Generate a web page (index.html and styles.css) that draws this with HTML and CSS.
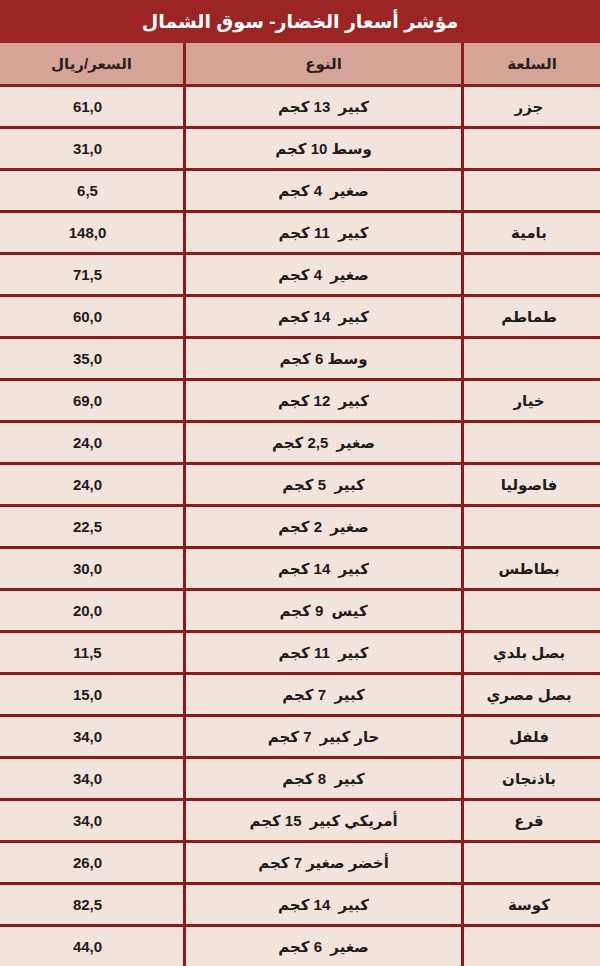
FILE: index.html
```html
<!DOCTYPE html>
<html lang="ar" dir="rtl">
<head>
<meta charset="utf-8">
<title>مؤشر أسعار الخضار- سوق الشمال</title>
<link rel="stylesheet" href="styles.css">
</head>
<body>
<div class="page">
  <h1 class="title">مؤشر أسعار الخضار- سوق الشمال</h1>
  <div class="grid">
    <div class="cell head">السلعة</div><div class="cell head">النوع</div><div class="cell head">السعر/ريال</div>

    <div class="cell name">جزر</div><div class="cell kind">كبير&nbsp; 13 كجم</div><div class="cell price">61,0</div>
    <div class="cell name"></div><div class="cell kind">وسط 10 كجم</div><div class="cell price">31,0</div>
    <div class="cell name"></div><div class="cell kind">صغير&nbsp; 4 كجم</div><div class="cell price">6,5</div>
    <div class="cell name">بامية</div><div class="cell kind">كبير&nbsp; 11 كجم</div><div class="cell price">148,0</div>
    <div class="cell name"></div><div class="cell kind">صغير&nbsp; 4 كجم</div><div class="cell price">71,5</div>
    <div class="cell name">طماطم</div><div class="cell kind">كبير&nbsp; 14 كجم</div><div class="cell price">60,0</div>
    <div class="cell name"></div><div class="cell kind">وسط 6 كجم</div><div class="cell price">35,0</div>
    <div class="cell name">خيار</div><div class="cell kind">كبير&nbsp; 12 كجم</div><div class="cell price">69,0</div>
    <div class="cell name"></div><div class="cell kind">صغير&nbsp; 2,5 كجم</div><div class="cell price">24,0</div>
    <div class="cell name">فاصوليا</div><div class="cell kind">كبير&nbsp; 5 كجم</div><div class="cell price">24,0</div>
    <div class="cell name"></div><div class="cell kind">صغير&nbsp; 2 كجم</div><div class="cell price">22,5</div>
    <div class="cell name">بطاطس</div><div class="cell kind">كبير&nbsp; 14 كجم</div><div class="cell price">30,0</div>
    <div class="cell name"></div><div class="cell kind">كيس&nbsp; 9 كجم</div><div class="cell price">20,0</div>
    <div class="cell name">بصل بلدي</div><div class="cell kind">كبير&nbsp; 11 كجم</div><div class="cell price">11,5</div>
    <div class="cell name">بصل مصري</div><div class="cell kind">كبير&nbsp; 7 كجم</div><div class="cell price">15,0</div>
    <div class="cell name">فلفل</div><div class="cell kind">حار كبير&nbsp; 7 كجم</div><div class="cell price">34,0</div>
    <div class="cell name">باذنجان</div><div class="cell kind">كبير&nbsp; 8 كجم</div><div class="cell price">34,0</div>
    <div class="cell name">قرع</div><div class="cell kind">أمريكي كبير&nbsp; 15 كجم</div><div class="cell price">34,0</div>
    <div class="cell name"></div><div class="cell kind">أخضر صغير 7 كجم</div><div class="cell price">26,0</div>
    <div class="cell name">كوسة</div><div class="cell kind">كبير&nbsp; 14 كجم</div><div class="cell price">82,5</div>
    <div class="cell name"></div><div class="cell kind">صغير&nbsp; 6 كجم</div><div class="cell price">44,0</div>
  </div>
</div>
</body>
</html>
```
FILE: styles.css
```css
html, body {
  margin: 0;
  padding: 0;
}
body {
  width: 600px;
  height: 966px;
  overflow: hidden;
  background: #f3e3dd;
  font-family: "Liberation Sans", "DejaVu Sans", sans-serif;
  color: #1f1b1b;
}
.page {
  display: flex;
  flex-direction: column;
}
.title {
  margin: 0;
  height: 43px;
  background: #9a2524;
  color: #ffffff;
  font-size: 19px;
  font-weight: bold;
  display: flex;
  align-items: center;
  justify-content: center;
  box-sizing: border-box;
}
.grid {
  display: grid;
  grid-template-columns: 136px 275px 183px;
  grid-template-rows: 41px;
  grid-auto-rows: 39px;
  gap: 3px;
  background: #8a1c1c;
}
.cell {
  background: #f3e3dd;
  display: flex;
  align-items: center;
  justify-content: center;
  font-weight: bold;
  font-size: 14px;
  white-space: nowrap;
}
.head {
  background: #d5a497;
  font-size: 15px;
  color: #2a2020;
}
.name {
  font-size: 15px;
  padding-right: 6px;
}
.kind {
  font-size: 15px;
}
.price {
  font-size: 15px;
  padding-right: 8px;
}
```
